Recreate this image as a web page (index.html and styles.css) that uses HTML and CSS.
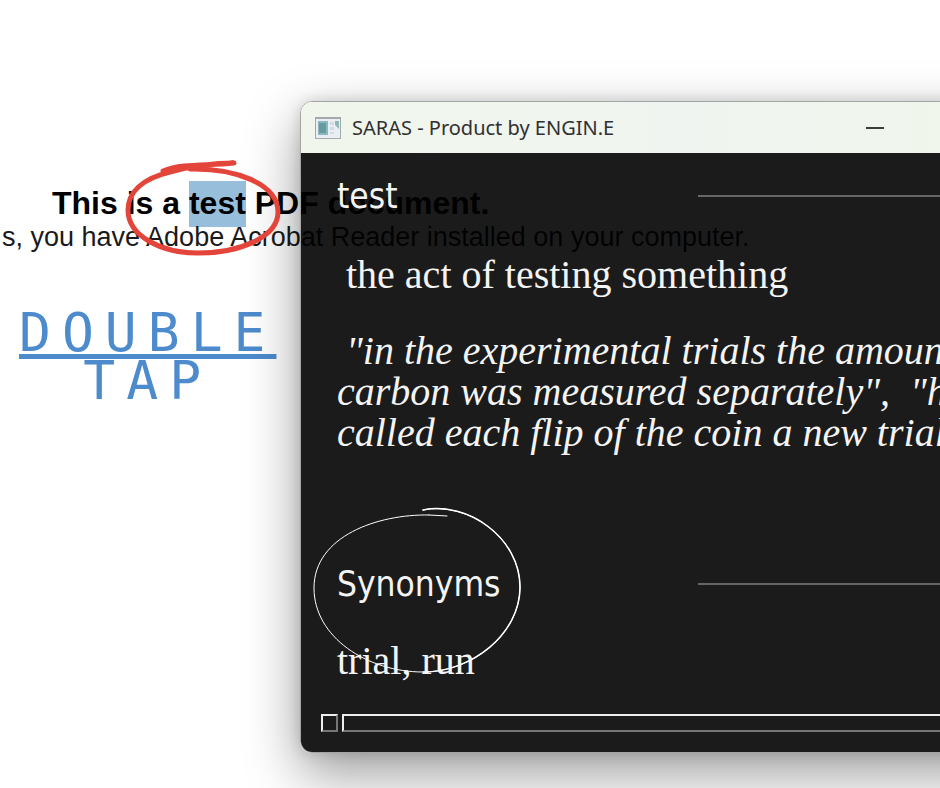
FILE: index.html
```html
<!DOCTYPE html>
<html lang="en">
<head>
<meta charset="utf-8">
<title>SARAS - Product by ENGIN.E</title>
<link rel="stylesheet" href="styles.css">
</head>
<body>
<main class="desktop">
  <article class="document">
    <h1 class="document-title">This is a <mark>test</mark> PDF document.</h1>
    <p class="document-text">s, you have Adobe Acrobat Reader installed on your computer.</p>
  </article>

  <p class="callout"><span class="callout-line">DOUBLE</span><br>TAP</p>

  <section class="window">
    <header class="titlebar">
      <svg class="app-icon" viewBox="0 0 26 22" aria-hidden="true">
        <rect x="0" y="0" width="26" height="22" fill="#a3a9ac"/>
        <rect x="1" y="2" width="24" height="19" fill="#e9eef2"/>
        <rect x="3" y="4" width="10" height="14" fill="#8cb9c1"/>
        <rect x="4" y="6" width="7" height="10" fill="#649da0"/>
        <path d="M15 5h4v3h-4zM15 10h4v3h-4zM15 15h4v2h-4z" fill="#d2dae4"/>
        <path d="M20 4h4v8l-2-2-2-2z" fill="#8fbab8"/>
      </svg>
      <span class="titlebar-text">SARAS - Product by ENGIN.E</span>
      <button class="minimize" type="button" aria-label="Minimize"></button>
    </header>
    <div class="content">
      <section class="entry">
        <div class="entry-head"><h2>test</h2><hr></div>
        <p class="definition">the act of testing something</p>
        <p class="example"><span class="lead">"in the experimental trials the amount of</span><br>carbon was measured separately",&nbsp; "he<br>called each flip of the coin a new trial"</p>
      </section>
      <section class="entry">
        <div class="entry-head"><h2>Synonyms</h2><hr></div>
        <p class="synonyms">trial, run</p>
      </section>
    </div>
    <footer class="statusbar"><span class="cell"></span><span class="cell cell-wide"></span></footer>
  </section>

  <svg class="mark-red" viewBox="0 0 160 98" aria-hidden="true">
    <path d="M40 12C60 4 84 7 111 4C88 4 62 9 47 13C18 20 5 34 5 51C5 77 38 94 75 94C117 94 155 78 155 53C155 25 113 9 67 10"/>
  </svg>
  <svg class="mark-white" viewBox="0 0 212 172" aria-hidden="true">
    <path d="M113 6C158-3 210 34 210 83C210 130 162 168 113 168C57 168 4 133 4 84C4 32 68 10 119 11" stroke-width="1"/>
    <path d="M113 6C158-3 210 34 210 83C210 130 162 168 113 168" stroke-width="1.5"/>
    <path d="M119 11L137 12" stroke-width="1"/>
  </svg>
</main>
</body>
</html>
```

FILE: styles.css
```css
* {
  box-sizing: border-box;
}

body {
  margin: 0;
  background: #fff;
  font-family: "Liberation Sans", sans-serif;
}

h1, h2, p {
  margin: 0;
  font-weight: 400;
}

.desktop {
  position: relative;
  min-height: 100vh;
  overflow: hidden;
  white-space: nowrap;
}

.document {
  position: absolute;
  top: 181px;
  left: 0;
  color: #000;
}

.document-title {
  padding-left: 52px;
  font-size: 32px;
  font-weight: 700;
  line-height: 44px;
}

.document-title mark {
  display: inline-block;
  height: 46px;
  background: #97bfdb;
  color: inherit;
}

.document-text {
  padding-left: 2px;
  color: #1a1a1a;
  font-size: 27px;
  line-height: 20px;
}

.callout {
  position: absolute;
  top: 309px;
  left: 19px;
  color: #4d8bcd;
  font-family: "DejaVu Sans Mono", monospace;
  font-size: 53px;
  letter-spacing: 11px;
  line-height: 48px;
  text-align: center;
}

.callout-line {
  text-decoration: underline;
  text-decoration-thickness: 5px;
  text-underline-offset: 3px;
  text-decoration-skip-ink: none;
}

.window {
  position: absolute;
  top: 101px;
  left: 300px;
  right: -160px;
  overflow: hidden;
  border: 1px solid #a4a4a4;
  border-radius: 12px;
  box-shadow: 0 20px 54px rgba(0, 0, 0, 0.4), 0 0 14px rgba(0, 0, 0, 0.14);
}

.titlebar {
  display: flex;
  align-items: center;
  height: 51px;
  padding: 0 215px 0 14px;
  background: linear-gradient(90deg, #f1f6ec, #eff4f0 48%, #f0f6e9);
}

.app-icon {
  width: 26px;
  height: 22px;
}

.titlebar-text {
  margin-left: 11px;
  color: #303030;
  font-family: "Noto Sans", sans-serif;
  font-size: 20px;
}

.minimize {
  width: 18px;
  height: 20px;
  margin-left: auto;
  padding: 0;
  border: 0;
  background: linear-gradient(#3c3c3c, #3c3c3c) center / 18px 2px no-repeat;
}

.content {
  padding: 19px 36px 0;
  background: rgba(0, 0, 0, 0.895);
  color: #f4f4f4;
  font-family: "Liberation Serif", serif;
}

.entry-head {
  display: grid;
  grid-template-columns: 361px 1fr;
  align-items: center;
}

.entry-head h2 {
  font-family: "DejaVu Sans Condensed", "Noto Sans", sans-serif;
  font-size: 35px;
  line-height: 48px;
}

.entry-head hr {
  width: 100%;
  height: 2px;
  margin: 0;
  border: 0;
  background: #666;
}

.definition,
.synonyms {
  font-size: 40px;
  line-height: 40px;
}

.definition {
  padding: 35px 0 0 9px;
}

.example {
  padding: 35px 0 107px;
  font-size: 40px;
  font-style: italic;
  line-height: 41px;
}

.lead {
  padding-left: 9px;
}

.synonyms {
  padding: 33px 0;
}

.statusbar {
  display: flex;
  gap: 4px;
  padding: 0 20px 20px;
  background: rgba(0, 0, 0, 0.895);
}

.cell {
  width: 17px;
  height: 18px;
  border: 2px solid;
  border-color: #eee #777 #777 #eee;
}

.cell-wide {
  flex: 1;
}

.mark-red,
.mark-white {
  position: absolute;
  fill: none;
  stroke-linecap: round;
  stroke-linejoin: round;
}

.mark-red {
  top: 159px;
  left: 123px;
  width: 160px;
  height: 98px;
  stroke: #e4453b;
  stroke-width: 5;
}

.mark-white {
  top: 504px;
  left: 310px;
  width: 212px;
  height: 172px;
  stroke: #fff;
}
```
